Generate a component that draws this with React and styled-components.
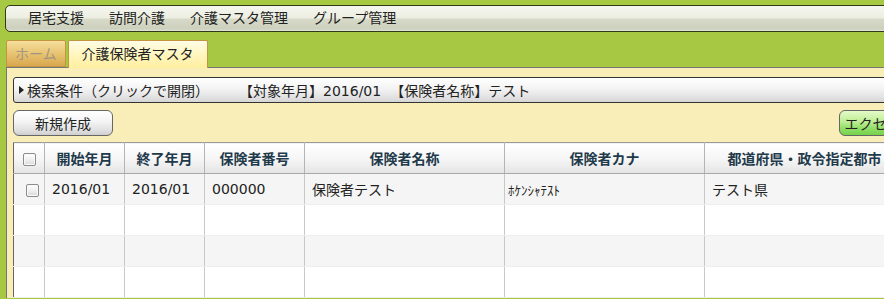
import React from "react";
import styled, { createGlobalStyle } from "styled-components";

const GlobalStyle = createGlobalStyle`
  html, body {
    margin: 0;
    padding: 0;
    background: #a6c843;
    overflow: hidden;
  }
  body {
    font-family: "DejaVu Sans", "Noto Sans CJK JP", sans-serif;
    font-size: 14px;
    color: #222;
  }
`;

const Page = styled.div`
  width: 1200px;
  padding: 5px 0 0 5px;
  box-sizing: border-box;
`;

const MenuBar = styled.nav`
  display: flex;
  align-items: center;
  gap: 1px;
  height: 27px;
  box-sizing: border-box;
  padding-left: 10px;
  border: 1px solid #2f3a18;
  border-radius: 5px;
  background: linear-gradient(#f5f6ef 0%, #eceee1 48%, #d7dac8 52%, #cdd0bd 92%, #e4e6da 100%);
`;

const MenuItem = styled.span`
  padding: 0 12px;
  line-height: 25px;
  color: #222;
  white-space: nowrap;
`;

const TabRow = styled.div`
  display: flex;
  align-items: flex-start;
  gap: 2px;
  margin: 8px 0 -1px 1px;
  position: relative;
  z-index: 1;
`;

const Tab = styled.div`
  box-sizing: border-box;
  height: ${(p) => (p.$active ? "28px" : "27px")};
  padding: 0 ${(p) => (p.$active ? "13px" : "8px")};
  line-height: 26px;
  border: 1px solid #c1963f;
  border-bottom: ${(p) => (p.$active ? "none" : "1px solid #c1963f")};
  border-radius: 2px 2px 0 0;
  color: ${(p) => (p.$active ? "#222" : "#a39680")};
  background: ${(p) =>
    p.$active
      ? "linear-gradient(#fffde6 0%, #fff6bf 50%, #ffef9f 100%)"
      : "linear-gradient(#f5df9d 0%, #e8c472 50%, #d9a74e 100%)"};
  white-space: nowrap;
`;

const Panel = styled.section`
  margin-left: 1px;
  width: 921px;
  border-top: 1px solid #767676;
  border-left: 1px solid #767676;
  background: #f9edb8;
  padding: 9px 0 0 6px;
  display: flex;
  flex-direction: column;
`;

const SearchBar = styled.div`
  display: flex;
  align-items: center;
  height: 26px;
  box-sizing: border-box;
  padding-left: 5px;
  border: 1px solid #333;
  border-radius: 3px;
  background: linear-gradient(#ffffff 0%, #f3f3f3 45%, #e2e2e2 80%, #d6d6d6 100%);
  white-space: pre;
  cursor: pointer;
`;

const Caret = styled.span`
  width: 0;
  height: 0;
  border-left: 5px solid #222;
  border-top: 4px solid transparent;
  border-bottom: 4px solid transparent;
  margin-right: 3px;
`;

const Criterion = styled.span`
  margin-left: ${(p) => p.$gap || "0"};
`;

const Toolbar = styled.div`
  display: flex;
  align-items: center;
  margin: 7px 0 6px;
`;

const Button = styled.button`
  height: 26px;
  box-sizing: border-box;
  padding: 0;
  width: ${(p) => p.$width || "100px"};
  margin-left: ${(p) => (p.$right ? "auto" : "0")};
  border: 1px solid #666;
  border-radius: 6px;
  font: inherit;
  color: #222;
  background: ${(p) =>
    p.$green
      ? "linear-gradient(#e4fbc8 0%, #bdee93 45%, #8ddd62 75%, #76d24c 100%)"
      : "linear-gradient(#ffffff 0%, #f4f4f4 45%, #e0e0e0 80%, #cfcfcf 100%)"};
  white-space: nowrap;
  overflow: hidden;
`;

const Table = styled.table`
  width: 921px;
  table-layout: fixed;
  border-collapse: collapse;
  border-left: 1px solid #666;
  background: #fff;
`;

const HeadCell = styled.th`
  height: 31px;
  padding: 0;
  box-sizing: border-box;
  border-top: 1px solid #9a9a9a;
  border-bottom: 1px solid #a8a8a8;
  border-right: 1px solid #b4b4b4;
  background: linear-gradient(#ffffff 0%, #f6f6f6 50%, #e4e4e4 100%);
  color: #1f3a4b;
  font-weight: bold;
  text-align: center;
  white-space: nowrap;
`;

const Row = styled.tr`
  background: ${(p) => (p.$odd ? "#f5f5f5" : "#ffffff")};
`;

const Cell = styled.td`
  height: 31px;
  box-sizing: border-box;
  padding: 0 0 0 ${(p) => (p.$kana ? "3px" : "7px")};
  border-right: 1px solid #c8c8c8;
  border-bottom: 1px solid #eeeeee;
  font-size: ${(p) => (p.$kana ? "13px" : "14px")};
  text-align: ${(p) => (p.$center ? "center" : "left")};
  white-space: nowrap;
  overflow: hidden;
  vertical-align: middle;
`;

const Check = styled.span`
  display: inline-block;
  vertical-align: middle;
  width: 13px;
  height: 13px;
  box-sizing: border-box;
  border: 1px solid #8c8c8c;
  border-radius: 2px;
  background: linear-gradient(#ffffff 0%, #ececec 60%, #d9d9d9 100%);
  box-shadow: inset 0 0 0 1px #fafafa;
`;

const columns = [
  { key: "check", width: 31 },
  { key: "start", width: 80, label: "開始年月" },
  { key: "end", width: 80, label: "終了年月" },
  { key: "no", width: 100, label: "保険者番号" },
  { key: "name", width: 200, label: "保険者名称" },
  { key: "kana", width: 200, label: "保険者カナ" },
  { key: "pref", width: 200, label: "都道府県・政令指定都市" },
  { key: "rest", width: 30, label: "" },
];

const rows = [
  {
    start: "2016/01",
    end: "2016/01",
    no: "000000",
    name: "保険者テスト",
    kana: "ﾎｹﾝｼｬﾃｽﾄ",
    pref: "テスト県",
    rest: "",
  },
  null,
  null,
  null,
];

export default function App() {
  return (
    <>
      <GlobalStyle />
      <Page>
        <MenuBar>
          <MenuItem>居宅支援</MenuItem>
          <MenuItem>訪問介護</MenuItem>
          <MenuItem>介護マスタ管理</MenuItem>
          <MenuItem>グループ管理</MenuItem>
        </MenuBar>
        <TabRow>
          <Tab>ホーム</Tab>
          <Tab $active>介護保険者マスタ</Tab>
        </TabRow>
        <Panel>
          <SearchBar>
            <Caret />
            <span>検索条件（クリックで開閉）</span>
            <Criterion $gap="30px">【対象年月】2016/01</Criterion>
            <Criterion $gap="9px">【保険者名称】テスト</Criterion>
          </SearchBar>
          <Toolbar>
            <Button>新規作成</Button>
            <Button $right $green $width="95px">エクセル出力</Button>
          </Toolbar>
          <Table>
            <colgroup>
              {columns.map((c) => (
                <col key={c.key} style={{ width: c.width }} />
              ))}
            </colgroup>
            <thead>
              <tr>
                {columns.map((c) => (
                  <HeadCell key={c.key}>
                    {c.key === "check" ? <Check /> : c.label}
                  </HeadCell>
                ))}
              </tr>
            </thead>
            <tbody>
              {rows.map((r, i) => (
                <Row key={i} $odd={i % 2 === 0}>
                  {columns.map((c) =>
                    c.key === "check" ? (
                      <Cell key={c.key} $center>
                        {r && <Check />}
                      </Cell>
                    ) : (
                      <Cell key={c.key} $kana={c.key === "kana"}>
                        {r ? r[c.key] : ""}
                      </Cell>
                    )
                  )}
                </Row>
              ))}
            </tbody>
          </Table>
        </Panel>
      </Page>
    </>
  );
}
